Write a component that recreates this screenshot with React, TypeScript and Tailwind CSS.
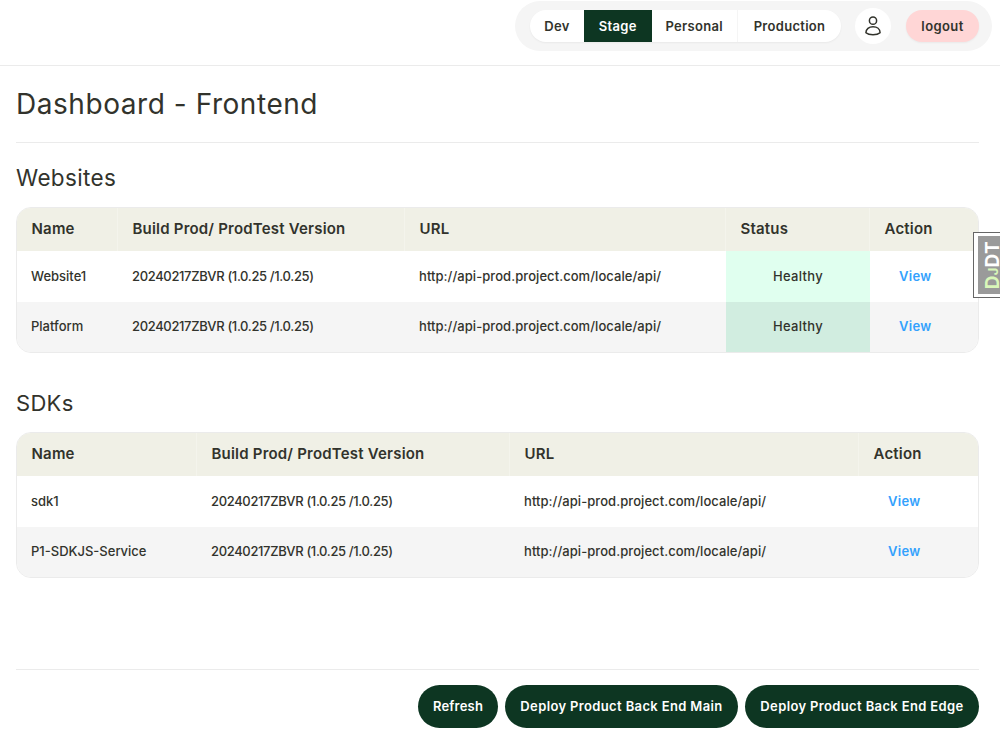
import clsx from "clsx";

type Row = {
  name: string;
  version: string;
  url: string;
  status?: string;
};

type Column = {
  label: string;
  width: string;
};

const environments = [
  { label: "Dev", className: "w-[54px]" },
  { label: "Stage", className: "w-[67.500px]" },
  { label: "Personal", className: "w-[86.500px] border-r border-[#f5f5f5]" },
  { label: "Production", className: "w-[103px]" },
];

const websiteColumns: Column[] = [
  { label: "Name", width: "w-[101px]" },
  { label: "Build Prod/ ProdTest Version", width: "w-[287px]" },
  { label: "URL", width: "w-[321px]" },
  { label: "Status", width: "w-[144px]" },
  { label: "Action", width: "w-[108px]" },
];

const sdkColumns: Column[] = [
  { label: "Name", width: "w-[180px]" },
  { label: "Build Prod/ ProdTest Version", width: "w-[313px]" },
  { label: "URL", width: "w-[349px]" },
  { label: "Action", width: "w-[119px]" },
];

const version = "20240217ZBVR (1.0.25 /1.0.25)";
const url = "http://api-prod.project.com/locale/api/";

const websites: Row[] = [
  { name: "Website1", version, url, status: "Healthy" },
  { name: "Platform", version, url, status: "Healthy" },
];

const sdks: Row[] = [
  { name: "sdk1", version, url },
  { name: "P1-SDKJS-Service", version, url },
];

const UserIcon = () => (
  <svg
    width="18"
    height="20"
    viewBox="0 0 18 20"
    fill="none"
    stroke="#32332c"
    strokeWidth="1.5"
    strokeLinejoin="round"
  >
    <circle cx="9" cy="4.7" r="3.6" />
    <path d="M1.9 16.8C1.9 13 5 10.700 9 10.700S16.100 13 16.100 16.800C14.500 18.200 12 18.800 9 18.800S3.500 18.200 1.900 16.800Z" />
  </svg>
);

const Header = () => (
  <header className="flex h-[66px] items-start justify-end border-b border-[#ebebeb] pt-px pr-2">
    <div className="flex h-[50px] items-center rounded-full bg-[#f5f5f5] pr-[13px] pl-[15px]">
      <nav className="flex h-8 overflow-hidden rounded-full bg-white text-[13px] font-semibold tracking-[0.3px] shadow-xs">
        {environments.map((env) => (
          <button
            key={env.label}
            className={clsx(
              "shrink-0 pt-px whitespace-nowrap",
              env.className,
              env.label === "Stage" && "bg-[#0d3622] text-white",
            )}
          >
            {env.label}
          </button>
        ))}
      </nav>
      <button className="ml-3.5 grid size-9 place-items-center rounded-full bg-white">
        <UserIcon />
      </button>
      <button className="ml-[15px] h-8 w-[73px] rounded-full bg-[#ffd6d6] pt-px text-[13px] font-semibold tracking-[0.4px] shadow-xs">
        logout
      </button>
    </div>
  </header>
);

const DataTable = ({ columns, rows }: { columns: Column[]; rows: Row[] }) => (
  <div className="h-[146px] overflow-hidden rounded-[15px] border border-[#ebebeb]">
    <table className="w-full table-fixed border-separate border-spacing-0 text-left whitespace-nowrap">
      <thead>
        <tr className="h-[43px] bg-[#f0f0e6] text-[15px] tracking-[0.2px]">
          {columns.map((column, i) => (
            <th
              key={column.label}
              className={clsx(
                "pl-[14.5px] font-semibold",
                column.width,
                i < columns.length - 1 && "border-r border-[#f4f4ec]",
              )}
            >
              {column.label}
            </th>
          ))}
        </tr>
      </thead>
      <tbody className="text-[13px] font-medium">
        {rows.map((row) => (
          <tr key={row.name} className="group h-[50.500px] even:bg-[#f5f5f5]">
            <td className="pl-3.5">{row.name}</td>
            <td className="pl-3.5 tracking-[-0.35px]">{row.version}</td>
            <td className="pl-3.5 tracking-[0.06px]">{row.url}</td>
            {row.status && (
              <td className="bg-[#e0ffef] text-center tracking-[0.3px] group-even:bg-[#d1ede0]">
                {row.status}
              </td>
            )}
            <td className="pl-[29px] font-semibold tracking-[0.3px] text-[#33a1fd]">
              <a href="#">View</a>
            </td>
          </tr>
        ))}
      </tbody>
    </table>
  </div>
);

const DebugHandle = () => (
  <div className="absolute top-[232px] right-0 h-[66px] w-[27px] border border-r-0 border-[#666] bg-white py-[3px] pl-1">
    <div className="flex h-full items-center justify-center bg-[#9a9a9a] pl-1.5">
      <span className="rotate-180 text-[19px] leading-none font-bold tracking-[0.3px] text-white [writing-mode:vertical-rl]">
        <span className="text-[#d9f7b9]">
          D<span className="text-[13px]">J</span>
        </span>
        DT
      </span>
    </div>
  </div>
);

export default function App() {
  return (
    <div className="relative h-[750px] w-[1000px] overflow-hidden bg-white font-['Inter',sans-serif] text-[#32332c]">
      <Header />
      <main className="pr-[21px] pl-4">
        <h1 className="flex h-[77px] items-center border-b border-[#ebebeb] text-[28px] leading-none tracking-[0.55px]">
          Dashboard - Frontend
        </h1>
        <section>
          <h2 className="flex h-16 items-center pt-1.5 text-[22.5px] leading-none tracking-[0.35px]">
            Websites
          </h2>
          <DataTable columns={websiteColumns} rows={websites} />
        </section>
        <section className="mt-[15px]">
          <h2 className="flex h-16 items-center pt-1.5 text-[22px] leading-none tracking-[0.3px]">
            SDKs
          </h2>
          <DataTable columns={sdkColumns} rows={sdks} />
        </section>
        <footer className="mt-[91px] flex justify-end gap-[7px] border-t border-[#ebebeb] pt-[14.5px] text-[13px] font-semibold tracking-[0.36px] text-white">
          <button className="h-[43px] w-20 rounded-full bg-[#0d3622] pt-px tracking-[0.2px]">
            Refresh
          </button>
          <button className="h-[43px] w-[233px] rounded-full bg-[#0d3622] pt-px">
            Deploy Product Back End Main
          </button>
          <button className="h-[43px] w-[234px] rounded-full bg-[#0d3622] pt-px">
            Deploy Product Back End Edge
          </button>
        </footer>
      </main>
      <DebugHandle />
    </div>
  );
}
